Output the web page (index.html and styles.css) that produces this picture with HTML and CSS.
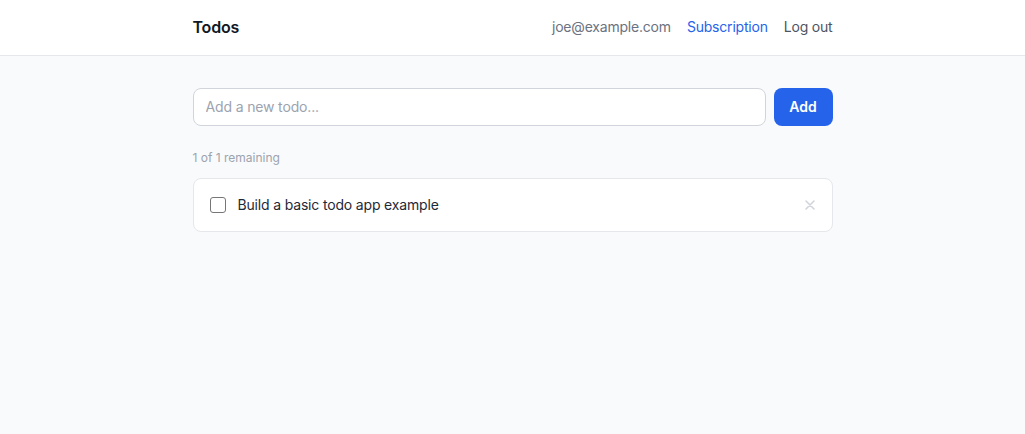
FILE: index.html
```html
<!DOCTYPE html>
<html lang="en">
<head>
<meta charset="utf-8">
<title>Todos</title>
<link rel="stylesheet" href="styles.css">
</head>
<body>
<header class="topbar">
  <div class="container topbar-inner">
    <div class="brand">Todos</div>
    <nav class="nav">
      <span class="nav-email">joe@example.com</span>
      <a class="nav-link nav-sub" href="#">Subscription</a>
      <a class="nav-link nav-logout" href="#">Log out</a>
    </nav>
  </div>
</header>
<main class="container main">
  <form class="add-form">
    <input class="add-input" type="text" placeholder="Add a new todo...">
    <button class="add-btn" type="button">Add</button>
  </form>
  <p class="remaining">1 of 1 remaining</p>
  <ul class="todo-list">
    <li class="todo-item">
      <span class="checkbox"></span>
      <span class="todo-text">Build a basic todo app example</span>
      <button class="delete-btn" type="button" aria-label="Delete">
        <svg width="10" height="10" viewBox="0 0 10 10"><path d="M1 1L9 9M9 1L1 9" stroke="currentColor" stroke-width="1.6" stroke-linecap="round"/></svg>
      </button>
    </li>
  </ul>
</main>
</body>
</html>
```

FILE: styles.css
```css
* { box-sizing: border-box; }
html, body { margin: 0; padding: 0; }
body {
  font-family: Inter, "Noto Sans", sans-serif;
  background: #f9fafb;
  color: #111827;
  min-height: 434px;
}
.container {
  max-width: 640px;
  margin: 0 auto;
}
.topbar {
  background: #ffffff;
  border-bottom: 1px solid #e5e7eb;
}
.topbar-inner {
  height: 55px;
  padding-bottom: 2px;
  display: flex;
  align-items: center;
  justify-content: space-between;
}
.brand {
  font-size: 16px;
  font-weight: 600;
  letter-spacing: -0.2px;
  color: #111827;
}
.nav {
  display: flex;
  align-items: center;
  gap: 16px;
  font-size: 14px;
  letter-spacing: -0.2px;
}
.nav-email { color: #6b7280; }
.nav-link { text-decoration: none; }
.nav-sub { color: #2563eb; }
.nav-logout { color: #4b5563; }
.main {
  padding-top: 32px;
}
.add-form {
  display: flex;
  gap: 8px;
  margin: 0;
}
.add-input {
  flex: 1;
  height: 38px;
  border: 1px solid #d1d5db;
  border-radius: 8px;
  padding: 0 12px 1px;
  font-family: inherit;
  font-size: 14px;
  letter-spacing: -0.15px;
  background: #fff;
  color: #111827;
  outline: none;
}
.add-input::placeholder { color: #9ca3af; }
.add-btn {
  height: 38px;
  width: 59px;
  border: none;
  border-radius: 8px;
  padding: 0 0 2px;
  background: #2563eb;
  color: #fff;
  font-family: inherit;
  font-size: 14px;
  font-weight: 600;
}
.remaining {
  margin: 24px 0 12px;
  font-size: 12px;
  line-height: 16px;
  color: #9ca3af;
}
.todo-list {
  list-style: none;
  margin: 0;
  padding: 0;
}
.todo-item {
  display: flex;
  align-items: center;
  gap: 12px;
  height: 54px;
  padding: 0 16px 1px;
  background: #fff;
  border: 1px solid #e5e7eb;
  border-radius: 8px;
}
.checkbox {
  width: 16px;
  height: 16px;
  border: 1px solid #767676;
  border-radius: 3px;
  background: #fff;
  flex: none;
}
.todo-text {
  flex: 1;
  font-size: 14px;
  letter-spacing: -0.17px;
  color: #1f2937;
  padding-bottom: 1px;
}
.delete-btn {
  border: none;
  background: none;
  padding: 0;
  color: #d1d5db;
  display: flex;
  align-items: center;
  margin-right: 1px;
}
```
